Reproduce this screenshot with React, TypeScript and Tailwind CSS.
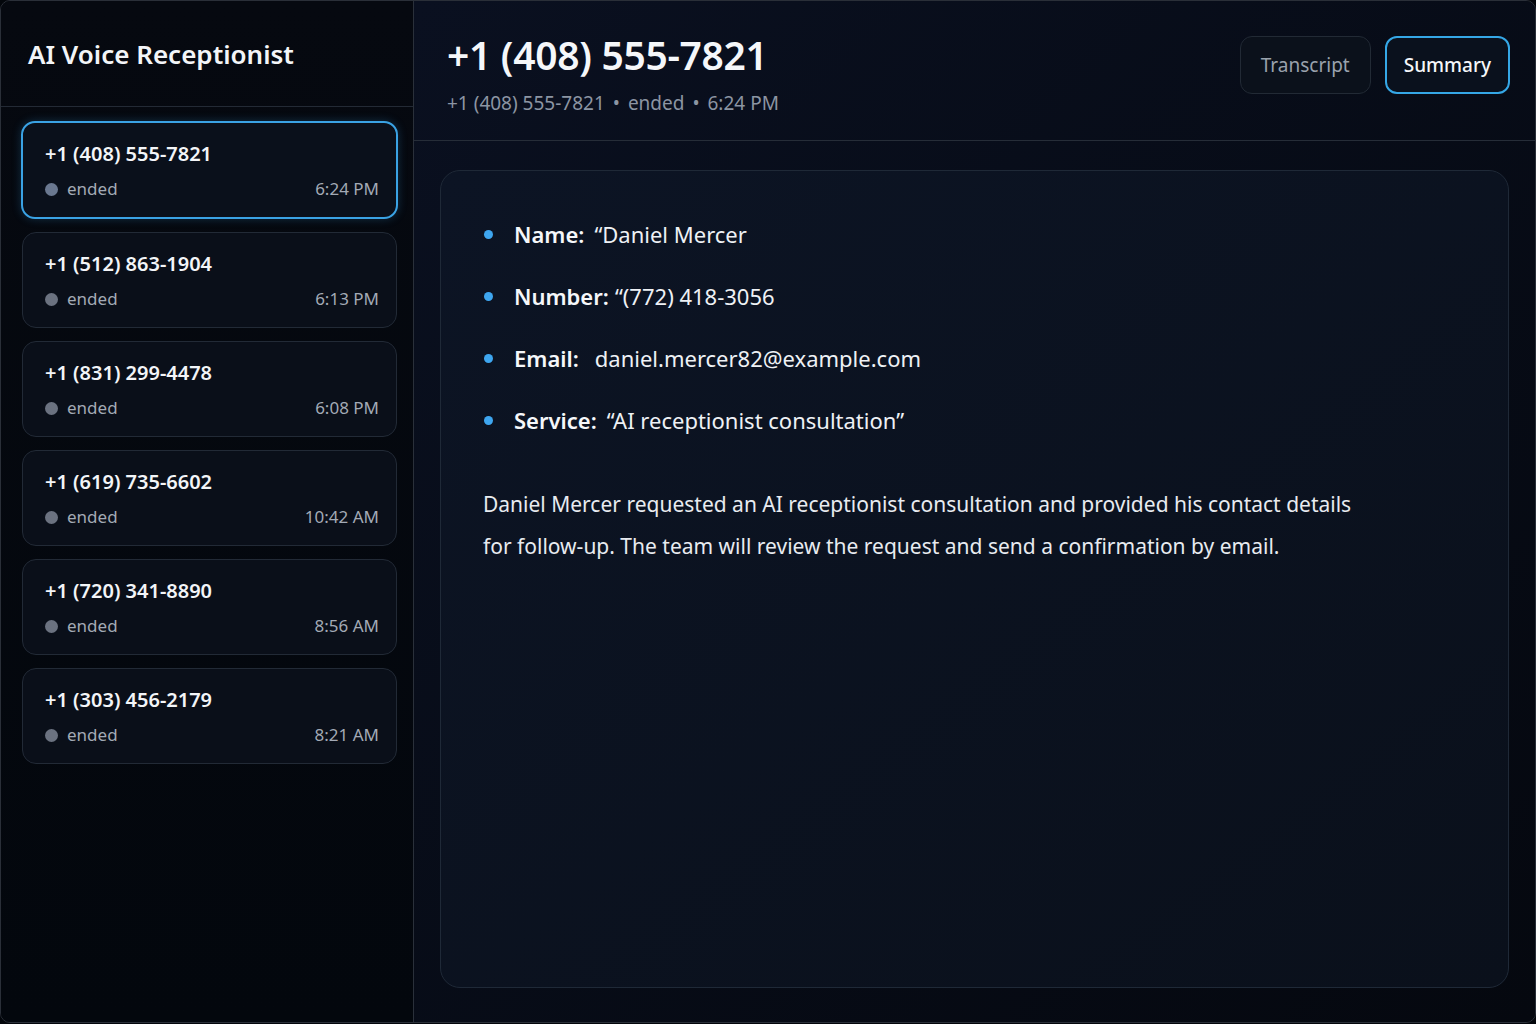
import React, { useState } from 'react';

type Call = {
  id: string;
  phone: string;
  status: string;
  time: string;
};

const calls: Call[] = [
{ id: '1', phone: '+1 (408) 555-7821', status: 'ended', time: '6:24 PM' },
{ id: '2', phone: '+1 (512) 863-1904', status: 'ended', time: '6:13 PM' },
{ id: '3', phone: '+1 (831) 299-4478', status: 'ended', time: '6:08 PM' },
{ id: '4', phone: '+1 (619) 735-6602', status: 'ended', time: '10:42 AM' },
{ id: '5', phone: '+1 (720) 341-8890', status: 'ended', time: '8:56 AM' },
{ id: '6', phone: '+1 (303) 456-2179', status: 'ended', time: '8:21 AM' }];


const summaryItems = [
{ label: 'Name:', value: '\u201CDaniel Mercer', gap: 'ml-2.5' },
{ label: 'Number:', value: '\u201C(772) 418-3056', gap: 'ml-1.5' },
{ label: 'Email:', value: 'daniel.mercer82@example.com', gap: 'ml-4' },
{ label: 'Service:', value: '\u201CAI receptionist consultation\u201D', gap: 'ml-2.5' }];


export default function App() {
  const [selectedId, setSelectedId] = useState('1');
  const [tab, setTab] = useState<'transcript' | 'summary'>('summary');
  const selected = calls.find((c) => c.id === selectedId)!;

  return (
    <div
      className="h-[1024px] w-[1536px] overflow-hidden bg-[#03060b]"
      style={{ fontFamily: '"Noto Sans", "Open Sans", sans-serif' }}>
      
      <div className="flex h-[1023px] overflow-hidden rounded-[10px] border border-[#2a2f38]">
        {/* sidebar */}
        <aside className="flex w-[413px] shrink-0 flex-col border-r border-[#2a303a] bg-gradient-to-b from-[#060910] to-[#03070d]">
          <div className="flex h-[106px] shrink-0 items-center border-b border-[#232a35] pl-[27px] pt-[2px]">
            <h1 className="text-[26px] font-semibold text-[#f3f5f8]">
              AI Voice Receptionist
            </h1>
          </div>
          <div className="flex flex-col gap-[13px] pl-[21px] pr-[16px] pt-[14px]">
            {calls.map((call) => {
              const active = call.id === selectedId;
              return (
                <button
                  key={call.id}
                  onClick={() => setSelectedId(call.id)}
                  className={
                  active ?
                  'flex h-[98px] flex-col rounded-[14px] border-2 border-[#3aa2e4] bg-[#0a101b] pl-[22px] pr-[17px] pt-[18px] text-left shadow-[0_0_10px_rgba(56,160,230,0.25)] -mx-px' :
                  'flex h-[96px] flex-col rounded-[14px] border border-[#222a36] bg-[#0a0f19] pl-[22px] pr-[17px] pt-[18px] text-left'
                  }>
                  
                  <span className="text-[20px] font-semibold leading-[26px] text-[#f3f5f8]">
                    {call.phone}
                  </span>
                  <span className="mt-[10px] flex items-center justify-between">
                    <span className="flex items-center gap-[9px]">
                      <span
                        className={
                        active ?
                        'h-[13px] w-[13px] rounded-full bg-[#6a7890]' :
                        'h-[13px] w-[13px] rounded-full bg-[#6b7280]'
                        } />
                      
                      <span className="text-[17px] leading-[24px] text-[#a3aab5]">{call.status}</span>
                    </span>
                    <span className="text-[17px] leading-[24px] text-[#a3aab5]">{call.time}</span>
                  </span>
                </button>);

            })}
          </div>
        </aside>

        {/* main */}
        <main className="flex min-w-0 flex-1 flex-col bg-gradient-to-br from-[#0a1020] to-[#05080f]">
          <header className="flex h-[140px] shrink-0 items-start justify-between border-b border-[#262d38] pl-[33px] pr-[25px]">
            <div className="pt-[27px]">
              <h2 className="text-[39px] font-semibold leading-[54px] tracking-[-0.3px] text-[#f5f7fa]">
                {selected.phone}
              </h2>
              <p className="mt-[9px] text-[19px] leading-[24px] text-[#8c95a3]">
                {selected.phone} <span className="mx-[3px]">•</span> {selected.status}{' '}
                <span className="mx-[3px]">•</span> {selected.time}
              </p>
            </div>
            <div className="mt-[35px] flex gap-[14px]">
              <button
                onClick={() => setTab('transcript')}
                className={
                tab === 'transcript' ?
                'h-[58px] rounded-[12px] border-2 border-[#35a7e6] bg-[#0a111d] px-[18px] text-[19px] text-[#f5f7fa]' :
                'h-[58px] rounded-[12px] border border-[#222a35] bg-[#0b111b] px-[20px] text-[19px] text-[#9aa2ad]'
                }>
                
                Transcript
              </button>
              <button
                onClick={() => setTab('summary')}
                className={
                tab === 'summary' ?
                'h-[58px] rounded-[12px] border-2 border-[#35a7e6] bg-[#0a111d] px-[17px] text-[19px] font-medium text-[#f5f7fa]' :
                'h-[58px] rounded-[12px] border border-[#222a35] bg-[#0b111b] px-[20px] text-[19px] text-[#9aa2ad]'
                }>
                
                Summary
              </button>
            </div>
          </header>

          <div className="flex flex-1 px-[26px] pt-[29px] pb-[34px]">
            <section className="flex-1 rounded-[20px] border border-[#1f2937] bg-gradient-to-br from-[#0c1424] to-[#0a101b] pl-[42px] pt-[44px]">
              {tab === 'summary' ?
              <>
                  <ul className="flex flex-col gap-[24px]">
                    {summaryItems.map((item) =>
                  <li key={item.label} className="flex items-center text-[22px] leading-[38px] text-[#eef1f5]">
                        <span className="mr-[21px] ml-[1px] h-[9px] w-[9px] rounded-full bg-[#3ea6f0]" />
                        <span className="font-semibold text-[#f5f7fa]">{item.label}</span>
                        <span className={item.gap}>{item.value}</span>
                      </li>
                  )}
                  </ul>
                  <p className="mt-[44px] max-w-[900px] text-[21px] leading-[42px] text-[#e8ebf0]">
                    Daniel Mercer requested an AI receptionist consultation and provided his contact details
                    for follow-up. The team will review the request and send a confirmation by email.
                  </p>
                </> :

              <p className="text-[20px] text-[#9aa2ad]">No transcript available.</p>
              }
            </section>
          </div>
        </main>
      </div>
    </div>);

}
